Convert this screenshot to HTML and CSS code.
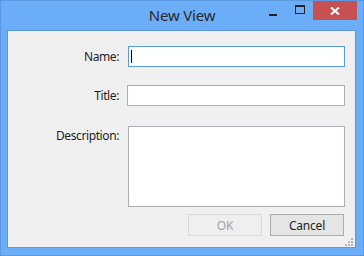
FILE: index.html
```html
<!DOCTYPE html>
<html lang="en">
<head>
    <meta charset="UTF-8">
    <title>New View</title>
    <link rel="stylesheet" href="styles.css">
</head>
<body>
    <div class="window">
        <div class="titlebar">
            <span class="title">New View</span>
            <div class="caption-buttons">
                <span class="cap-btn"><span class="min-icon"></span></span>
                <span class="cap-btn"><span class="max-icon"></span></span>
                <span class="cap-btn close">
                    <svg width="10" height="8" viewBox="0 0 10 8">
                        <path d="M1 0.5 L9 7.5 M9 0.5 L1 7.5" stroke="#fff" stroke-width="2" fill="none"/>
                    </svg>
                </span>
            </div>
        </div>
        <div class="client">
            <div class="row row-name">
                <label class="label">Name:</label>
                <div class="field focused"><span class="caret"></span></div>
            </div>
            <div class="row row-title">
                <label class="label">Title:</label>
                <div class="field wide"></div>
            </div>
            <div class="row row-desc">
                <label class="label">Description:</label>
                <div class="field area"></div>
            </div>
            <div class="buttons">
                <button class="btn" disabled>OK</button>
                <button class="btn">Cancel</button>
            </div>
            <div class="grip">
                <svg width="8" height="8" viewBox="0 0 8 8">
                    <rect x="6" y="0" width="2" height="2" fill="#b5b5b5"/>
                    <rect x="3" y="3" width="2" height="2" fill="#b5b5b5"/>
                    <rect x="6" y="3" width="2" height="2" fill="#b5b5b5"/>
                    <rect x="0" y="6" width="2" height="2" fill="#b5b5b5"/>
                    <rect x="3" y="6" width="2" height="2" fill="#b5b5b5"/>
                    <rect x="6" y="6" width="2" height="2" fill="#b5b5b5"/>
                </svg>
            </div>
        </div>
    </div>
</body>
</html>
```

FILE: styles.css
```css
body {
    margin: 0;
    font-family: "Noto Sans", "DejaVu Sans", sans-serif;
}
.window {
    width: 364px;
    height: 256px;
    box-sizing: border-box;
    background-color: #6badf6;
    border: 1px solid #5a97df;
    display: flex;
    flex-direction: column;
}
.titlebar {
    height: 29px;
    position: relative;
    display: flex;
    justify-content: center;
    align-items: center;
}
.title {
    font-size: 15px;
    color: #2a2a2a;
    letter-spacing: -0.2px;
    margin-top: -1px;
}
.caption-buttons {
    position: absolute;
    top: 0;
    right: 6px;
    display: flex;
    align-items: flex-start;
}
.cap-btn {
    width: 27px;
    height: 19px;
    display: flex;
    justify-content: center;
    align-items: center;
}
.min-icon {
    width: 8px;
    height: 2px;
    background-color: #222;
    margin-top: 8px;
}
.max-icon {
    width: 8px;
    height: 6px;
    border: 1px solid #222;
    border-top-width: 2px;
    margin-top: -2px;
}
.close {
    width: 44px;
    background-color: #c75050;
}
.client {
    flex: 1;
    margin: 0 7px 7px 6px;
    background-color: #f0f0f0;
    border: 1px solid #5a97df;
    position: relative;
    font-size: 12px;
    letter-spacing: -0.4px;
    color: #1e1e1e;
}
.row {
    display: flex;
    align-items: center;
}
.label {
    width: 111px;
    text-align: right;
    flex-shrink: 0;
}
.field {
    background-color: #fff;
    border: 1px solid #abadb3;
    box-sizing: border-box;
    width: 217px;
    height: 21px;
    margin-left: 9px;
}
.field.wide {
    width: 218px;
    margin-left: 8px;
}
.field.focused {
    border-color: #569de5;
    display: flex;
    align-items: center;
}
.caret {
    width: 1px;
    height: 13px;
    background-color: #000;
    margin-left: 2px;
}
.row-name {
    margin-top: 15px;
}
.row-title {
    margin-top: 18px;
}
.row-desc {
    margin-top: 20px;
    align-items: flex-start;
}
.row-desc .label {
    margin-top: 1px;
}
.field.area {
    height: 81px;
}
.buttons {
    display: flex;
    justify-content: flex-end;
    gap: 8px;
    margin-top: 7px;
    padding-right: 11px;
}
.btn {
    width: 74px;
    height: 22px;
    box-sizing: border-box;
    font-family: inherit;
    font-size: 12px;
    letter-spacing: -0.2px;
    color: #1e1e1e;
    background-color: #e5e5e5;
    border: 1px solid #acacac;
    padding: 0;
}
.btn:disabled {
    color: #a3a3a3;
    background-color: #efefef;
    border-color: #d9d9d9;
}
.grip {
    position: absolute;
    right: 2px;
    bottom: 1px;
    line-height: 0;
}
```
